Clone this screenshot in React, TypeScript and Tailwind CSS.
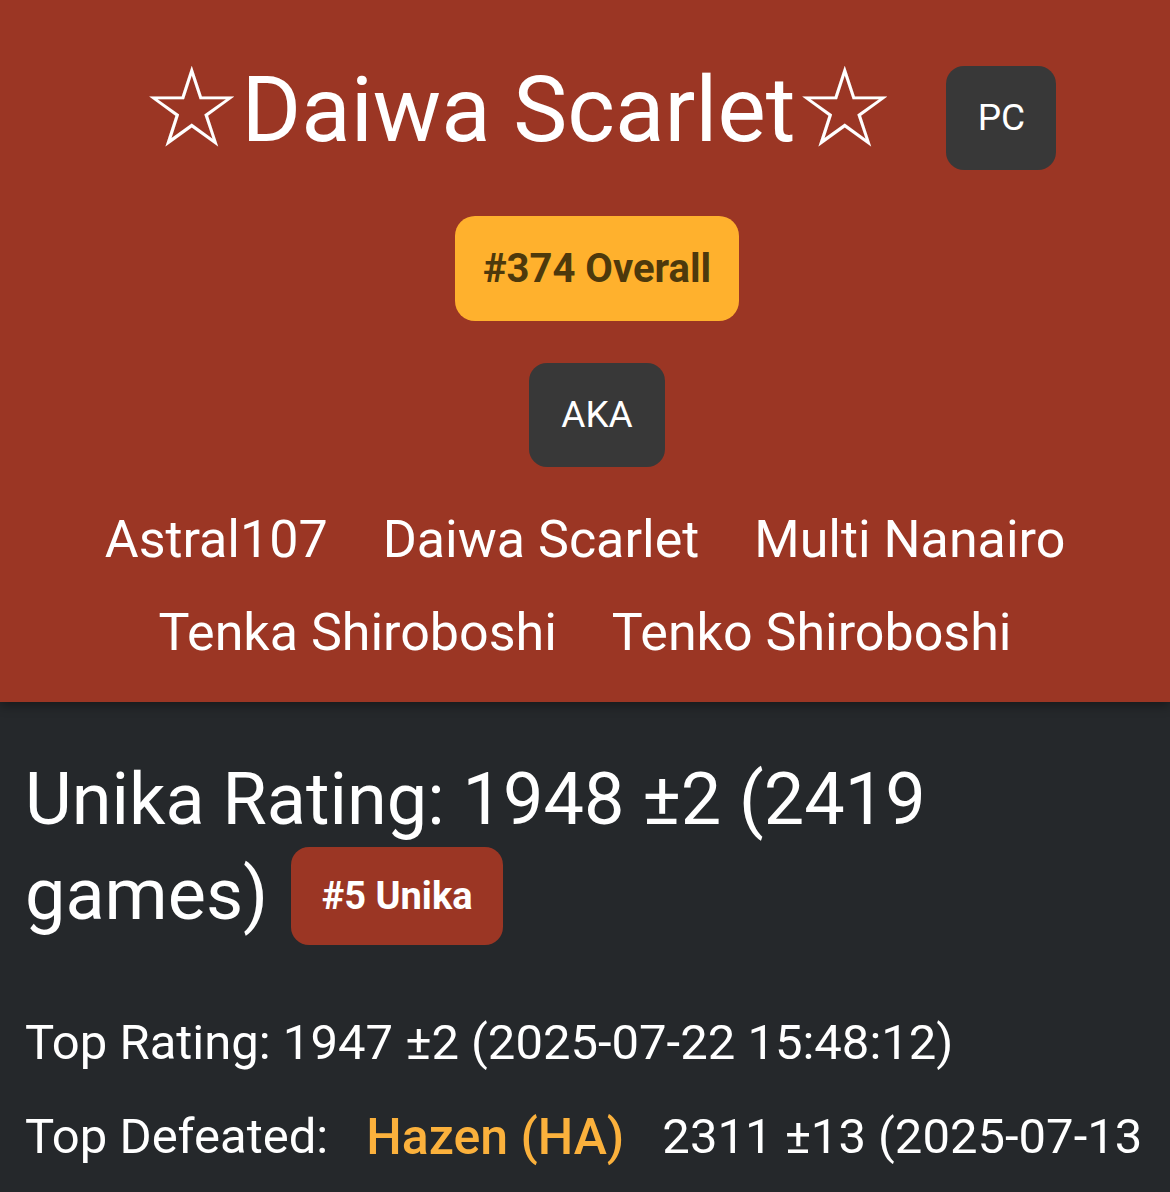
export default function App() {
  const names = ["Astral107", "Daiwa Scarlet", "Multi Nanairo", "Tenka Shiroboshi", "Tenko Shiroboshi"];
  return (
    <div className="min-h-[1192px] w-[1170px] overflow-hidden bg-[#25282b] font-['Roboto',sans-serif] text-white">
      <div className="relative z-10 flex flex-col items-center bg-[#9b3624] px-[25px] pt-[66px] pb-[23px] shadow-[0_4px_10px_rgba(0,0,0,0.35)]">
        <div className="ml-[28px] flex items-start gap-[51px]">
          <div className="-mt-[18px] flex items-baseline whitespace-nowrap leading-none">
            <span className="relative top-[5px] text-[111px]">☆</span>
            <span className="text-[91px]">Daiwa Scarlet</span>
            <span className="relative top-[5px] text-[111px]">☆</span>
          </div>
          <div className="flex h-[104px] w-[110px] items-center justify-center rounded-[18px] bg-[#383838] text-[37px]">PC</div>
        </div>
        <div className="ml-[24px] mt-[46px] flex h-[105px] w-[284px] items-center justify-center rounded-[20px] bg-[#ffb12d] text-[40px] font-bold text-[#4d390c]">
          #374 Overall
        </div>
        <div className="ml-[24px] mt-[42px] flex h-[104px] w-[136px] items-center justify-center rounded-[18px] bg-[#383838] text-[37px]">AKA</div>
        <div className="mt-[26px] flex flex-wrap justify-center gap-x-[55px] text-[52px] leading-[93px]">
          {names.map((n) => (
            <span key={n} className="whitespace-nowrap">{n}</span>
          ))}
        </div>
      </div>
      <div className="px-[25px] pt-[50px]">
        <div className="text-[72px] leading-[95px]">
          Unika Rating: 1948 ±2 (2419 games)
          <span className="relative -top-[4px] ml-[23px] inline-flex h-[98px] w-[212px] items-center justify-center rounded-[18px] bg-[#9b3624] align-middle text-[38px] font-bold leading-none">
            #5 Unika
          </span>
        </div>
        <div className="mt-[47px] whitespace-nowrap text-[49px] leading-[94px]">Top Rating: 1947 ±2 (2025-07-22 15:48:12)</div>
        <div className="flex gap-[38px] whitespace-nowrap text-[49px] leading-[94px]">
          <span>Top Defeated:</span>
          <span className="text-[50px] font-medium text-[#fbb13c]">Hazen (HA)</span>
          <span>2311 ±13 (2025-07-13</span>
        </div>
      </div>
    </div>
  );
}
